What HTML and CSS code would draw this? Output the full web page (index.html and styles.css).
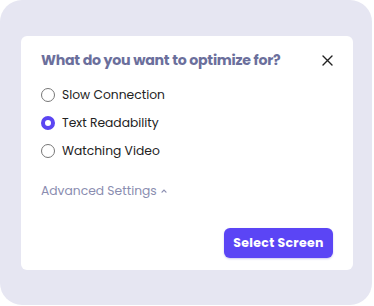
FILE: index.html
```html
<!DOCTYPE html>
<html>
<head>
<meta charset="utf-8">
<link rel="stylesheet" href="styles.css">
</head>
<body>
<div class="frame">
  <div class="card">
    <div class="header">
      <h1 class="title">What do you want to optimize for?</h1>
      <svg class="close" width="11" height="11" viewBox="0 0 11 11"><path d="M1 1L10 10M10 1L1 10" stroke="#222" stroke-width="1.4" stroke-linecap="round"/></svg>
    </div>
    <div class="options">
      <label class="option"><span class="radio"></span><span>Slow Connection</span></label>
      <label class="option"><span class="radio checked"></span><span>Text Readability</span></label>
      <label class="option"><span class="radio"></span><span>Watching Video</span></label>
    </div>
    <div class="advanced">Advanced Settings
      <svg class="chev" width="6" height="4" viewBox="0 0 6 4"><path d="M1 3.2L3 1.2L5 3.2" stroke="#8a8db0" stroke-width="1.2" fill="none" stroke-linecap="round"/></svg>
    </div>
    <div class="footer">
      <button class="btn">Select Screen</button>
    </div>
  </div>
</div>
</body>
</html>
```

FILE: styles.css
```css
html, body { margin: 0; padding: 0; background: #fff; }
body { font-family: "Poppins", "DejaVu Sans", sans-serif; }
.frame {
  width: 372px;
  height: 305px;
  background: #e6e6f2;
  border-radius: 22px;
  padding: 36px 19px 0 21px;
  box-sizing: border-box;
}
.card {
  width: 332px;
  height: 234px;
  background: #fff;
  border-radius: 6px;
  box-sizing: border-box;
  padding: 14px 20px 12px 20px;
  display: flex;
  flex-direction: column;
}
.header {
  display: flex;
  align-items: center;
  justify-content: space-between;
  height: 20px;
  padding-right: 0;
}
.title {
  margin: 0;
  font-size: 14.2px;
  font-weight: 700;
  color: #6b6f9c;
  letter-spacing: -0.25px;
}
.close { margin-right: 0; }
.options {
  margin-top: 16px;
  display: flex;
  flex-direction: column;
  gap: 10px;
}
.option {
  display: flex;
  align-items: center;
  gap: 7px;
  height: 18px;
  font-size: 12.3px;
  color: #222;
}
.radio {
  width: 14px;
  height: 14px;
  border: 1.2px solid #777;
  border-radius: 50%;
  box-sizing: border-box;
}
.radio.checked {
  border: 4px solid #5b45f2;
  background: #fff;
}
.advanced {
  margin-top: 22px;
  font-size: 12.3px;
  color: #8a8db0;
  display: flex;
  align-items: center;
  gap: 4px;
}
.chev { margin-top: -1px; }
.footer {
  margin-top: auto;
  display: flex;
  justify-content: flex-end;
}
.btn {
  width: 109px;
  height: 30px;
  border: none;
  border-radius: 6px;
  background: #5b45f5;
  color: #fff;
  font-family: inherit;
  font-weight: 700;
  font-size: 12.5px;
  letter-spacing: 0.3px;
  padding: 0;
  box-shadow: 0 1px 2px rgba(60,40,200,0.25);
}
```
